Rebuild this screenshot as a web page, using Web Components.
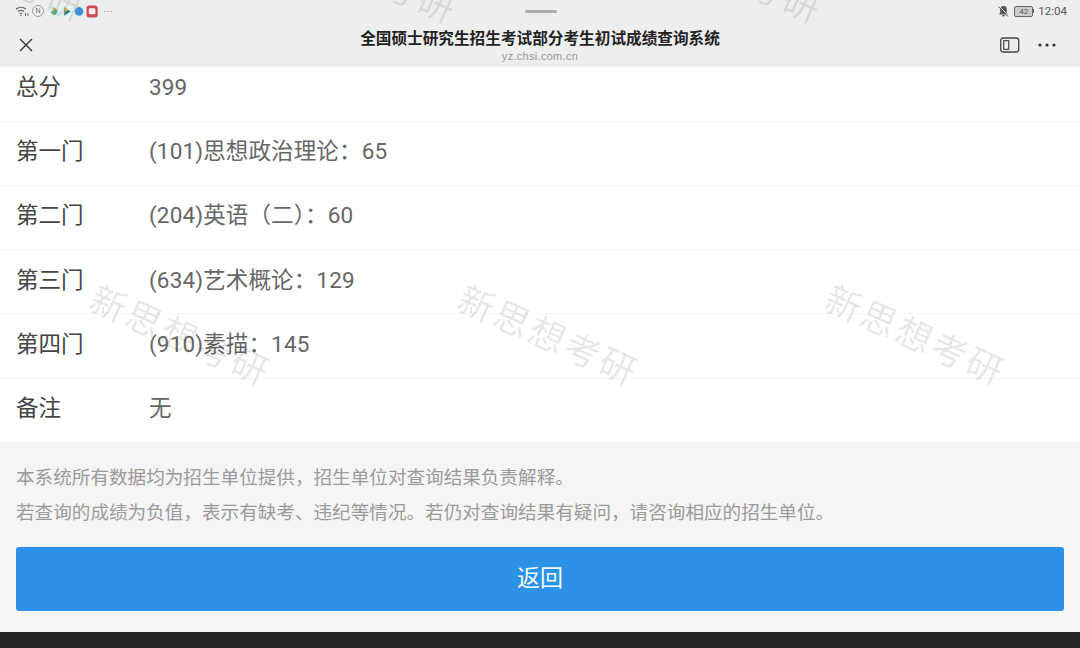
<!DOCTYPE html>
<html lang="zh">
<head>
<meta charset="utf-8">
<title>全国硕士研究生招生考试部分考生初试成绩查询系统</title>
<style>
  html, body { margin: 0; height: 100%; }
  body {
    width: 1080px;
    height: 648px;
    overflow: hidden;
    font-family: Roboto, "Noto Sans CJK SC", sans-serif;
  }
</style>
</head>
<body>
<score-page>
  <app-header slot="header"></app-header>
  <score-row label="总分" value="399"></score-row>
  <score-row label="第一门" value="(101)思想政治理论：65"></score-row>
  <score-row label="第二门" value="(204)英语（二）：60"></score-row>
  <score-row label="第三门" value="(634)艺术概论：129"></score-row>
  <score-row label="第四门" value="(910)素描：145"></score-row>
  <score-row label="备注" value="无"></score-row>
  <notice-panel slot="footer">
    <p>本系统所有数据均为招生单位提供，招生单位对查询结果负责解释。</p>
    <p>若查询的成绩为负值，表示有缺考、违纪等情况。若仍对查询结果有疑问，请咨询相应的招生单位。</p>
    <back-button slot="action">返回</back-button>
  </notice-panel>
  <water-mark slot="overlay" style="left:-99px;top:-51px"></water-mark>
  <water-mark slot="overlay" style="left:272px;top:-49px"></water-mark>
  <water-mark slot="overlay" style="left:637px;top:-49px"></water-mark>
  <water-mark slot="overlay" style="left:85px;top:313px"></water-mark>
  <water-mark slot="overlay" style="left:453px;top:313px"></water-mark>
  <water-mark slot="overlay" style="left:820px;top:313px"></water-mark>
</score-page>

<script>
class ScorePage extends HTMLElement {
  constructor() {
    super();
    this.attachShadow({ mode: 'open' });
    this.shadowRoot.innerHTML = `
      <style>
        :host {
          display: flex;
          flex-direction: column;
          position: relative;
          width: 1080px;
          height: 648px;
          overflow: hidden;
          background: #fff;
        }
        .head { position: relative; z-index: 1; flex: none; }
        .rows { flex: none; height: 376px; display: flex; flex-direction: column; justify-content: flex-end; overflow: hidden; }
        .foot { flex: none; height: 189px; }
        .bottom { flex: none; height: 16px; background: #272727; }
        .overlay { position: absolute; inset: 0; z-index: 2; pointer-events: none; }
      </style>
      <div class="head"><slot name="header"></slot></div>
      <div class="rows"><slot></slot></div>
      <div class="foot"><slot name="footer"></slot></div>
      <div class="bottom"></div>
      <div class="overlay"><slot name="overlay"></slot></div>
    `;
  }
}

class AppHeader extends HTMLElement {
  constructor() {
    super();
    this.attachShadow({ mode: 'open' });
    this.shadowRoot.innerHTML = `
      <style>
        :host {
          display: block;
          height: 67px;
          background: #eeeeee;
          color: #222;
        }
        .status {
          height: 22px;
          display: grid;
          grid-template-columns: 1fr auto 1fr;
          align-items: center;
          padding: 0 13px 0 15px;
        }
        .left, .right { display: flex; align-items: center; }
        .left { gap: 3px; }
        .right { justify-content: flex-end; color: #555; font-size: 11.500px; }
        .handle { width: 32px; height: 3px; border-radius: 2px; background: #aaa; }
        .n {
          width: 10px; height: 10px; border: 1px solid #999; border-radius: 50%;
          font: 7px/10px "Liberation Sans", sans-serif; text-align: center; color: #666;
          box-sizing: content-box;
        }
        .dots { font: 9px/10px "Liberation Sans", sans-serif; color: #777; margin-left: 1px; letter-spacing: .3px; }
        .battery {
          width: 17px; height: 9px; border: 1px solid #666; border-radius: 2px; margin-left: 5px;
          font: 8px/9px Roboto, sans-serif; text-align: center; background: #ccc; color: #555;
        }
        .nub { width: 1px; height: 4px; background: #666; margin-right: 4px; }
        .nav {
          height: 45px;
          display: grid;
          grid-template-columns: 1fr auto 1fr;
          align-items: center;
          padding: 0 24px;
        }
        .close { margin-left: -6px; }
        .title { text-align: center; }
        .title b {
          display: block;
          font: 700 15.650px/22px "Noto Sans CJK SC", sans-serif;
          color: #222;
        }
        .title span {
          display: block;
          font: 11px/14px "Liberation Sans", sans-serif;
          color: #999;
          letter-spacing: .3px;
        }
        .actions { display: flex; justify-content: flex-end; align-items: center; gap: 18px; }
        svg { display: block; }
      </style>
      <div class="status">
        <div class="left">
          <svg width="14" height="12" viewBox="0 0 14 12" fill="none" stroke="#666" stroke-width="1.2">
            <path d="M1 4.200a8 8 0 0 1 10 0M3 6.400a5 5 0 0 1 6 0M4.800 8.400a2.200 2.200 0 0 1 2.400 0"/>
            <circle cx="6" cy="10.300" r=".8" fill="#666" stroke="none"/>
            <path d="M10.500 8v3M13 8v3" stroke-width="1"/>
          </svg>
          <div class="n">N</div>
          <svg width="51" height="13" viewBox="0 0 54 14" style="margin-left:1px">
            <rect x="0" y="1" width="12" height="12" rx="3" fill="#e2f4f7"/>
            <path d="M6 2.500l4 3-1 4.500-4 1-3-3z" fill="#d9b65a"/>
            <path d="M2.500 8l5-3 2.500 2-3 4z" fill="#4fa6a8"/>
            <rect x="14" y="1" width="12" height="12" rx="3" fill="#e2f6f7"/>
            <path d="M17 2.500l7 4.500-7 4.500z" fill="#35857f"/>
            <path d="M17 2.500l4.500 2.800-4.500 2z" fill="#dcb44a"/>
            <rect x="27" y="1" width="12" height="12" rx="3" fill="#e4eff8"/>
            <circle cx="33" cy="7" r="4.600" fill="#3f8fd6"/>
            <rect x="41" y=".5" width="12" height="13" rx="3" fill="#cf4a55"/>
            <rect x="43.500" y="3.500" width="7" height="6.500" rx="1" fill="#fbeeee"/>
          </svg>
          <span class="dots">···</span>
        </div>
        <div class="handle"></div>
        <div class="right">
          <svg width="11" height="12" viewBox="0 0 11 12" fill="#555">
            <path d="M5.500 1a3.300 3.300 0 0 0-3.300 3.300V8L1 9.500h9L8.800 8V4.300A3.300 3.300 0 0 0 5.500 1z"/>
            <rect x="4.300" y="10" width="2.400" height="1.300"/>
            <path d="M1 1l9.500 10" stroke="#eee" stroke-width="1"/>
            <path d="M.5 1.500l9.500 10" stroke="#555" stroke-width="1"/>
          </svg>
          <div class="battery">42</div>
          <div class="nub"></div>
          <span>12:04</span>
        </div>
      </div>
      <div class="nav">
        <svg class="close" width="16" height="16" viewBox="0 0 16 16" stroke="#333" stroke-width="1.400" fill="none">
          <path d="M2 2l12 12M14 2L2 14"/>
        </svg>
        <div class="title">
          <b>全国硕士研究生招生考试部分考生初试成绩查询系统</b>
          <span>yz.chsi.com.cn</span>
        </div>
        <div class="actions">
          <svg width="20" height="16" viewBox="0 0 20 16" fill="none" stroke="#444" stroke-width="1.300">
            <rect x=".7" y="1" width="18" height="14" rx="2.500"/>
            <rect x="3.700" y="3.700" width="5" height="8.600" stroke-width="1.200"/>
          </svg>
          <svg width="18" height="4" viewBox="0 0 18 4" fill="#333">
            <circle cx="2" cy="2" r="1.600"/><circle cx="9" cy="2" r="1.600"/><circle cx="16" cy="2" r="1.600"/>
          </svg>
        </div>
      </div>
    `;
  }
}

class ScoreRow extends HTMLElement {
  constructor() {
    super();
    this.attachShadow({ mode: 'open' });
  }

  connectedCallback() {
    this.shadowRoot.innerHTML = `
      <style>
        :host {
          display: grid;
          grid-template-columns: 133px 1fr;
          align-items: center;
          flex: none;
          height: 64.300px;
          box-sizing: border-box;
          padding: 0 0 4px 16px;
          border-bottom: 1px solid #f6f6f6;
          font: 22.500px/30px Roboto, "Noto Sans CJK SC", sans-serif;
        }
        :host(:last-child) { border-bottom: 0; padding-bottom: 3px; }
        .label { color: #444; }
        .value { color: #666; letter-spacing: .14px; }
      </style>
      <span class="label">${this.getAttribute('label')}</span>
      <span class="value">${this.getAttribute('value')}</span>
    `;
  }
}

class NoticePanel extends HTMLElement {
  constructor() {
    super();
    this.attachShadow({ mode: 'open' });
    this.shadowRoot.innerHTML = `
      <style>
        :host {
          display: block;
          height: 100%;
          box-sizing: border-box;
          padding: 15px 16px 0;
          background: #f5f5f5;
          color: #9a9a9a;
          font: 18.600px/35px "Noto Sans CJK SC", sans-serif;
        }
        ::slotted(p) { margin: 0; white-space: nowrap; }
        .action { margin-top: 19px; }
      </style>
      <slot></slot>
      <div class="action"><slot name="action"></slot></div>
    `;
  }
}

class BackButton extends HTMLElement {
  constructor() {
    super();
    this.attachShadow({ mode: 'open' });
    this.shadowRoot.innerHTML = `
      <style>
        :host {
          display: flex;
          align-items: center;
          justify-content: center;
          height: 64px;
          box-sizing: border-box;
          padding-bottom: 7px;
          border-radius: 3px;
          background: #2b92e8;
          color: #f4f9fe;
          font: 23px/30px "Noto Sans CJK SC", sans-serif;
          cursor: pointer;
        }
      </style>
      <slot></slot>
    `;
  }
}

class WaterMark extends HTMLElement {
  constructor() {
    super();
    this.attachShadow({ mode: 'open' });
    this.shadowRoot.innerHTML = `
      <style>
        :host {
          position: absolute;
          display: block;
          white-space: nowrap;
          color: rgba(0, 0, 0, .1);
          font: 36px/40px "Noto Sans CJK SC", sans-serif;
          letter-spacing: 2.500px;
          transform: rotate(24deg);
          transform-origin: center;
        }
      </style>
      新思想考研
    `;
  }
}

customElements.define('score-page', ScorePage);
customElements.define('app-header', AppHeader);
customElements.define('score-row', ScoreRow);
customElements.define('notice-panel', NoticePanel);
customElements.define('back-button', BackButton);
customElements.define('water-mark', WaterMark);
</script>
</body>
</html>
